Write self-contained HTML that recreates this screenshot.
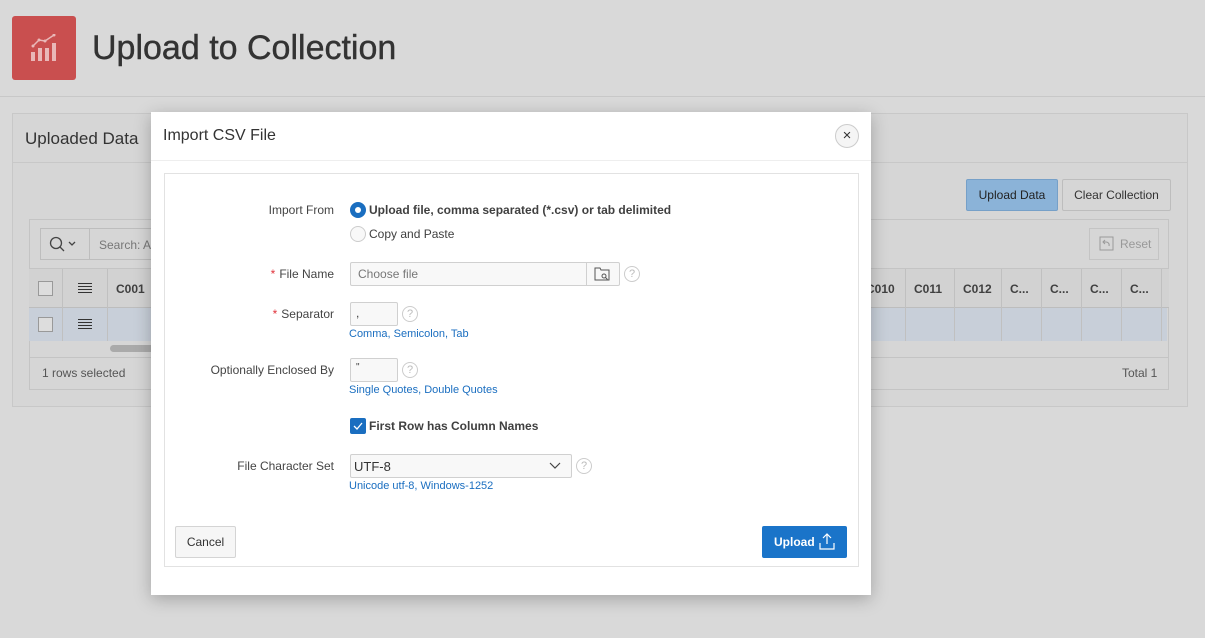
<!DOCTYPE html>
<html><head><meta charset="utf-8"><style>
*{box-sizing:border-box;margin:0;padding:0}
body{width:1205px;height:638px;background:#d9d9d9;font-family:"Liberation Sans",Arial,sans-serif;position:relative;overflow:hidden;color:#404040;font-size:12px}
.a{position:absolute;white-space:nowrap}
.lbl{position:absolute;text-align:right;font-size:12px;color:#444}
.link{color:#1a6ec0;font-size:11px}
.inp{position:absolute;border:1px solid #d0d0d0;background:#f8f8f8;border-radius:2px}
.help{position:absolute;width:16px;height:16px;border:1px solid #ccc;border-radius:50%;color:#bbb;font-size:11px;text-align:center;line-height:14px}
.req{color:#e0333b;margin-right:4px}
.vl{position:absolute;width:1px;background:#c0c0c0}
</style></head><body>
<div class="a" style="left:12px;top:16px;width:64px;height:64px;background:#c94f4f;border-radius:3px"></div>
<svg class="a" style="left:30px;top:34px" width="28" height="28" viewBox="0 0 28 28"><g fill="#e9b8b8"><rect x="1" y="18" width="4" height="9"/><rect x="8" y="14" width="4" height="13"/><rect x="15" y="14" width="4" height="13"/><rect x="22" y="9" width="4" height="18"/></g><polyline points="3,12 9,6 15,7 24,1" fill="none" stroke="#e9b8b8" stroke-width="1.5"/><g fill="#e9b8b8"><circle cx="3" cy="12" r="1.5"/><circle cx="9" cy="6" r="1.5"/><circle cx="15" cy="7" r="1.5"/><circle cx="24" cy="1" r="1.5"/></g></svg>
<div class="a" style="left:92px;top:29px;font-size:34px;color:#333;-webkit-text-stroke:0.4px #333">Upload to Collection</div>
<div class="a" style="left:0;top:96px;width:1205px;height:1px;background:#c8c8c8"></div>
<div class="a" style="left:12px;top:113px;width:1176px;height:294px;border:1px solid #c8c8c8;background:#d6d6d6"></div>
<div class="a" style="left:13px;top:162px;width:1174px;height:1px;background:#c8c8c8"></div>
<div class="a" style="left:25px;top:129px;font-size:17px;color:#333">Uploaded Data</div>
<div class="a" style="left:966px;top:179px;width:92px;height:32px;background:#8bb3d8;border:1px solid #76a0c8;border-radius:2px;font-size:12px;color:#222;text-align:center;line-height:30px">Upload Data</div>
<div class="a" style="left:1062px;top:179px;width:109px;height:32px;background:#d6d6d6;border:1px solid #bdbdbd;border-radius:2px;font-size:12px;color:#333;text-align:center;line-height:30px">Clear Collection</div>
<div class="a" style="left:29px;top:219px;width:1140px;height:171px;border:1px solid #c4c4c4;background:#d6d6d6"></div>
<div class="a" style="left:40px;top:228px;width:50px;height:32px;border:1px solid #bdbdbd;background:#d6d6d6"></div>
<svg class="a" style="left:48px;top:235px" width="32" height="18"><circle cx="8" cy="8" r="5.5" fill="none" stroke="#444" stroke-width="1.3"/><path d="M12 12l4 4M21 7l3 3 3-3" fill="none" stroke="#444" stroke-width="1.3"/></svg>
<div class="a" style="left:89px;top:228px;width:70px;height:32px;border:1px solid #bdbdbd;border-left:0;padding:9px 10px;color:#777">Search: A</div>
<div class="a" style="left:1089px;top:228px;width:70px;height:32px;border:1px solid #c4c4c4;color:#999;line-height:30px;padding-left:30px">Reset</div>
<svg class="a" style="left:1099px;top:236px" width="16" height="16"><rect x="1" y="1" width="13" height="13" fill="none" stroke="#999"/><path d="M10 10a3 3 0 0 0-3-4H4M6 4L4 6l2 2" fill="none" stroke="#999"/></svg>
<div class="a" style="left:29px;top:268px;width:1140px;height:1px;background:#c4c4c4"></div>
<div class="a" style="left:29px;top:269px;width:1140px;height:39px;background:#d2d2d2;border-bottom:1px solid #bdbdbd"></div>
<div class="a" style="left:29px;top:308px;width:1138px;height:33px;background:#c8cfd9"></div>
<div class="vl" style="left:62px;top:269px;height:72px"></div>
<div class="vl" style="left:107px;top:269px;height:72px"></div>
<div class="vl" style="left:905px;top:269px;height:72px"></div>
<div class="vl" style="left:954px;top:269px;height:72px"></div>
<div class="vl" style="left:1001px;top:269px;height:72px"></div>
<div class="vl" style="left:1041px;top:269px;height:72px"></div>
<div class="vl" style="left:1081px;top:269px;height:72px"></div>
<div class="vl" style="left:1121px;top:269px;height:72px"></div>
<div class="vl" style="left:1161px;top:269px;height:72px"></div>
<div class="a" style="left:38px;top:281px;width:15px;height:15px;border:1px solid #999;background:#ddd"></div>
<div class="a" style="left:38px;top:317px;width:15px;height:15px;border:1px solid #999;background:#ddd"></div>
<svg class="a" style="left:78px;top:283px" width="14" height="10"><path d="M0 .5h14M0 3.5h14M0 6.5h14M0 9.5h14" stroke="#333"/></svg>
<svg class="a" style="left:78px;top:319px" width="14" height="10"><path d="M0 .5h14M0 3.5h14M0 6.5h14M0 9.5h14" stroke="#333"/></svg>
<div class="a" style="left:116px;top:282px;font-weight:bold">C001</div>
<div class="a" style="left:866px;top:282px;font-weight:bold">C010</div>
<div class="a" style="left:914px;top:282px;font-weight:bold">C011</div>
<div class="a" style="left:963px;top:282px;font-weight:bold">C012</div>
<div class="a" style="left:1010px;top:282px;font-weight:bold">C...</div>
<div class="a" style="left:1050px;top:282px;font-weight:bold">C...</div>
<div class="a" style="left:1090px;top:282px;font-weight:bold">C...</div>
<div class="a" style="left:1130px;top:282px;font-weight:bold">C...</div>
<div class="a" style="left:110px;top:345px;width:50px;height:7px;background:#aaa;border-radius:4px"></div>
<div class="a" style="left:29px;top:357px;width:1140px;height:1px;background:#c4c4c4"></div>
<div class="a" style="left:42px;top:366px;color:#555">1 rows selected</div>
<div class="a" style="left:1122px;top:366px;color:#555">Total 1</div>
<div class="a" style="left:151px;top:112px;width:720px;height:483px;background:#fff;box-shadow:0 4px 16px rgba(0,0,0,.25)"></div>
<div class="a" style="left:163px;top:127px;font-size:16px;color:#333">Import CSV File</div>
<div class="a" style="left:835px;top:124px;width:24px;height:24px;border:1px solid #ccc;border-radius:50%;background:#f5f5f5;text-align:center;line-height:21px;font-size:15px;color:#333">&#215;</div>
<div class="a" style="left:151px;top:160px;width:720px;height:1px;background:#eee"></div>
<div class="a" style="left:164px;top:173px;width:695px;height:394px;border:1px solid #e2e2e2"></div>
<div class="lbl" style="top:203px;right:871px">Import From</div>
<div class="a" style="left:350px;top:202px;width:16px;height:16px;border-radius:50%;background:#1a6ec0"></div>
<div class="a" style="left:355px;top:207px;width:6px;height:6px;border-radius:50%;background:#fff"></div>
<div class="a" style="left:369px;top:203px;font-weight:bold;color:#404040">Upload file, comma separated (*.csv) or tab delimited</div>
<div class="a" style="left:350px;top:226px;width:16px;height:16px;border-radius:50%;border:1px solid #ccc;background:#f8f8f8"></div>
<div class="a" style="left:369px;top:227px">Copy and Paste</div>
<div class="lbl" style="top:267px;right:871px"><span class="req">*</span>File Name</div>
<div class="inp" style="left:350px;top:262px;width:270px;height:24px"></div>
<div class="a" style="left:586px;top:263px;width:1px;height:22px;background:#d0d0d0"></div>
<div class="a" style="left:358px;top:267px;color:#777">Choose file</div>
<svg class="a" style="left:594px;top:267px" width="16" height="14"><path d="M1 1h5l1 2h8v10H1z" fill="none" stroke="#555"/><circle cx="10" cy="9" r="2" fill="none" stroke="#555"/><path d="M11.5 10.5l2 2" stroke="#555"/></svg>
<div class="help" style="left:624px;top:266px">?</div>
<div class="lbl" style="top:307px;right:871px"><span class="req">*</span>Separator</div>
<div class="inp" style="left:350px;top:302px;width:48px;height:24px;padding:3px 5px">,</div>
<div class="help" style="left:402px;top:306px">?</div>
<div class="a link" style="left:349px;top:328px">Comma, Semicolon, Tab</div>
<div class="lbl" style="top:363px;right:871px">Optionally Enclosed By</div>
<div class="inp" style="left:350px;top:358px;width:48px;height:24px;padding:3px 5px;font-size:10px">"</div>
<div class="help" style="left:402px;top:362px">?</div>
<div class="a link" style="left:349px;top:384px">Single Quotes, Double Quotes</div>
<div class="a" style="left:350px;top:418px;width:16px;height:16px;border-radius:2px;background:#1a6ec0"></div>
<svg class="a" style="left:352px;top:420px" width="12" height="12"><path d="M2 6l3 3 5-6" fill="none" stroke="#fff" stroke-width="1.3"/></svg>
<div class="a" style="left:369px;top:419px;font-weight:bold">First Row has Column Names</div>
<div class="lbl" style="top:459px;right:871px">File Character Set</div>
<div class="inp" style="left:350px;top:454px;width:222px;height:24px;padding:4px 3px;color:#333;font-size:13px">UTF-8</div>
<svg class="a" style="left:549px;top:462px" width="12" height="8"><path d="M1 1l5 5 5-5" fill="none" stroke="#444" stroke-width="1.2"/></svg>
<div class="help" style="left:576px;top:458px">?</div>
<div class="a link" style="left:349px;top:480px">Unicode utf-8, Windows-1252</div>
<div class="a" style="left:175px;top:526px;width:61px;height:32px;border:1px solid #d4d4d4;background:#f6f6f6;border-radius:2px;text-align:center;line-height:30px;color:#333">Cancel</div>
<div class="a" style="left:762px;top:526px;width:85px;height:32px;background:#1a74c9;border-radius:2px;color:#fff;font-weight:bold;line-height:32px;padding-left:12px">Upload</div>
<svg class="a" style="left:818px;top:532px" width="18" height="18"><path d="M9 2v10M5 6l4-4 4 4M2 11v6h14v-6" fill="none" stroke="#fff" stroke-width="1.2"/></svg>
</body></html>
